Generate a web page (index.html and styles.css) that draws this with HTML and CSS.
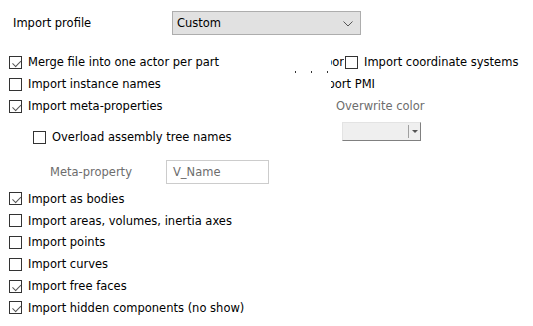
FILE: index.html
```html
<!DOCTYPE html>
<html>
<head>
<meta charset="UTF-8" />
<title>Import options</title>
<link rel="stylesheet" href="styles.css">
</head>
<body>
<div class="profile">
	<span class="profile-label">Import profile</span>
	<div class="combo">Custom
		<svg class="combo-arrow" width="10" height="6" viewBox="0 0 10 6"><path d="M0.5 0.5 L5 5 L9.5 0.5" fill="none" stroke="#555" stroke-width="1"/></svg>
	</div>
</div>

<div class="upper">
	<div class="col-left">
		<label class="opt"><span class="box checked"></span>Merge file into one actor per part</label>
		<label class="opt"><span class="box"></span>Import instance names</label>
		<label class="opt"><span class="box checked"></span>Import meta-properties</label>
		<label class="opt sub-opt"><span class="box"></span>Overload assembly tree names</label>
		<div class="meta-row">
			<span class="meta-label">Meta-property</span>
			<div class="text-field">V_Name</div>
		</div>
	</div>
	<div class="col-right">
		<span class="dots"><i></i><i></i><i></i></span>
		<div class="opt"><span class="clip clip-short"><span>Import coor</span></span><span class="box"></span>Import coordinate systems</div>
		<div class="opt"><span class="clip clip-long"><span>Import PMI</span></span></div>
		<div class="grey-label">Overwrite color</div>
		<div class="color-combo"><span class="color-sep"></span><span class="color-arrow"></span></div>
	</div>
</div>

<div class="lower">
	<label class="opt"><span class="box checked"></span>Import as bodies</label>
	<label class="opt"><span class="box"></span>Import areas, volumes, inertia axes</label>
	<label class="opt"><span class="box"></span>Import points</label>
	<label class="opt"><span class="box"></span>Import curves</label>
	<label class="opt"><span class="box checked"></span>Import free faces</label>
	<label class="opt"><span class="box checked"></span>Import hidden components (no show)</label>
</div>
</body>
</html>
```
FILE: styles.css
```css
body { margin: 0; background: #ffffff; color: #000000;
	font-family: "DejaVu Sans", Tahoma, sans-serif; font-size: 11.5px; }

.profile { display: flex; align-items: center; padding: 11px 0 0 13px; height: 24px; }
.profile-label { width: 159px; }
.combo { height: 22px; border: 1px solid #adadad; background: #e1e1e1;
	display: flex; align-items: center; justify-content: space-between; padding: 0 7px 0 4px; box-sizing: content-box; width: 176px; }
.combo-arrow { margin-top: 1px; }

.upper { display: grid; grid-template-columns: 331px auto; margin-top: 16px; }

.opt { display: flex; align-items: center; height: 22px; white-space: nowrap; }
.col-left .opt, .lower .opt { padding-left: 9px; }
.opt.sub-opt { padding-left: 33px; margin-top: 9px; }

.box { width: 13px; height: 13px; border: 1px solid #333333; box-sizing: border-box; margin-right: 6px;
	background: #ffffff; position: relative; flex: none; }
.box.checked::after { content: ""; position: absolute; left: 2px; top: 1px; width: 7px; height: 4px;
	border-left: 1px solid #555555; border-bottom: 1px solid #555555; transform: rotate(-45deg) translate(-1px, 2px); }

.col-right { position: relative; }
.dots { position: absolute; left: -36px; top: 20px; display: flex; gap: 15px; }
.dots i { width: 1px; height: 2px; background: #333333; }

.clip { display: inline-flex; justify-content: flex-end; overflow: hidden; flex: none; }
.clip-short { width: 13px; margin-right: 1px; }
.clip-long { width: 44px; }

.meta-row { display: flex; align-items: center; padding-left: 50px; margin-top: 12px; height: 24px; }
.meta-label { color: #6d6d6d; width: 116px; }
.text-field { width: 103px; height: 24px; border: 1px solid #cccccc; box-sizing: border-box; color: #6d6d6d;
	display: flex; align-items: center; padding-left: 6px; }

.grey-label { color: #6d6d6d; padding-left: 5px; height: 22px; display: flex; align-items: center; }
.color-combo { width: 79px; height: 19px; margin: 5px 0 0 11px; box-sizing: border-box; background: #efefef;
	border: 1px solid #e3e3e3; border-right-color: #808080; border-bottom-color: #808080;
	display: flex; align-items: center; justify-content: flex-end; }
.color-sep { width: 1px; height: 13px; background: #a0a0a0; margin-right: 3px; }
.color-arrow { width: 0; height: 0; border-left: 3px solid transparent; border-right: 3px solid transparent;
	border-top: 3px solid #555555; margin-right: 2px; }

.lower { margin-top: 4px; }
.lower .opt { height: 21.8px; }
```
